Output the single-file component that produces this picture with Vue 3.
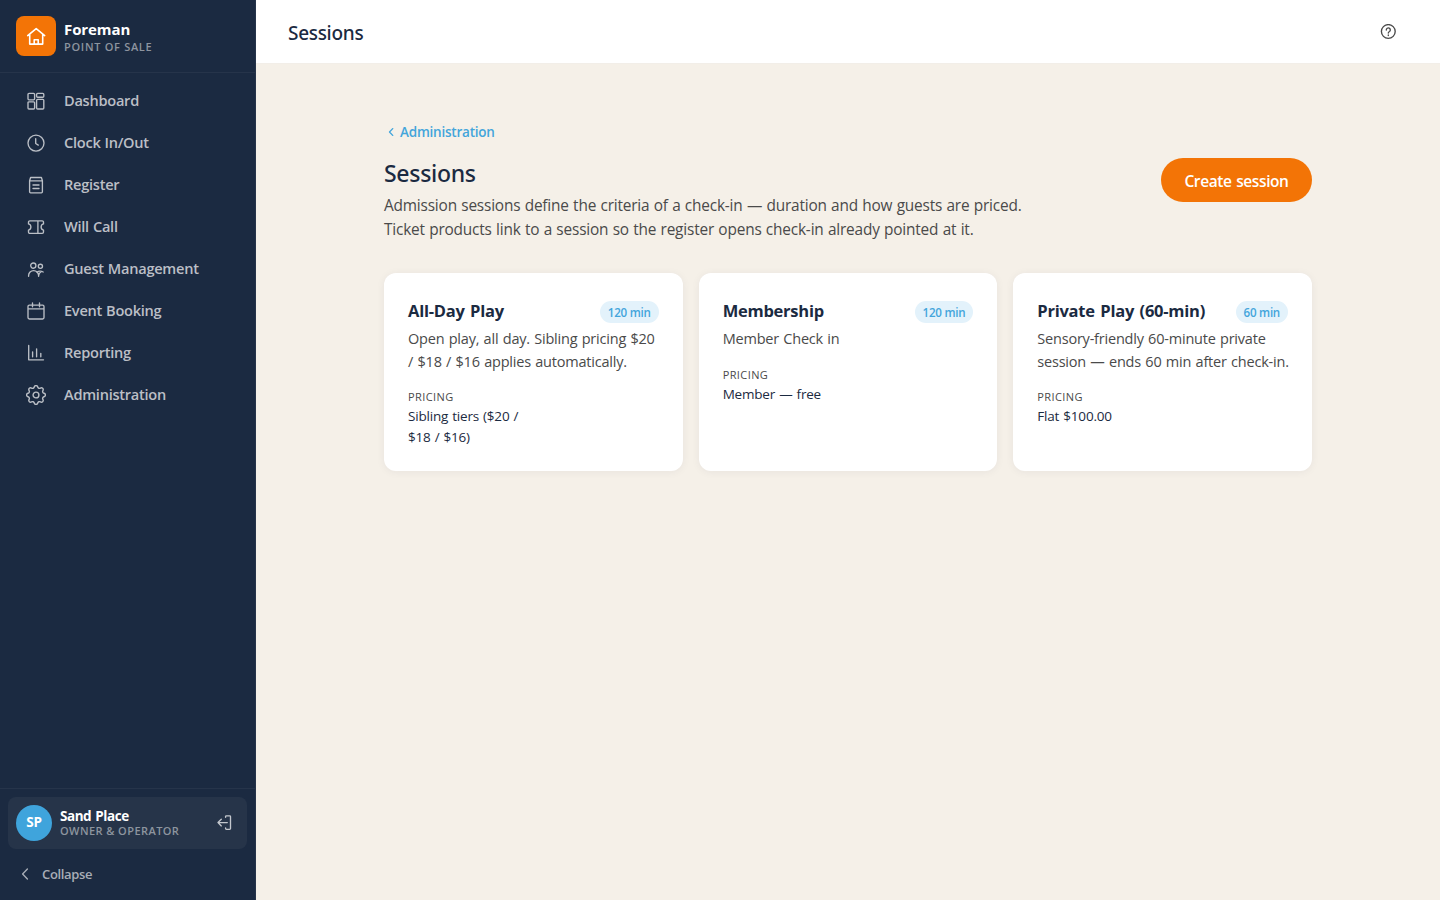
<script setup>
import { ref } from 'vue'

const navItems = [
  { id: 'dashboard', label: 'Dashboard' },
  { id: 'clock', label: 'Clock In/Out' },
  { id: 'register', label: 'Register' },
  { id: 'ticket', label: 'Will Call' },
  { id: 'guests', label: 'Guest Management' },
  { id: 'calendar', label: 'Event Booking' },
  { id: 'chart', label: 'Reporting' },
  { id: 'gear', label: 'Administration', viewBox: '2.4 2.4 19.2 19.2' }
]

const icons = {
  dashboard:
    'M3 2.4h4.6a1 1 0 0 1 1 1v4.4a1 1 0 0 1-1 1H3a1 1 0 0 1-1-1V3.4a1 1 0 0 1 1-1zM11.6 2.4h5.2a1 1 0 0 1 1 1v1.8a1 1 0 0 1-1 1h-5.2a1 1 0 0 1-1-1V3.4a1 1 0 0 1 1-1zM3 10.8h4.6a1 1 0 0 1 1 1v5.2a1 1 0 0 1-1 1H3a1 1 0 0 1-1-1v-5.2a1 1 0 0 1 1-1zM11.6 8.3h5.2a1 1 0 0 1 1 1V17a1 1 0 0 1-1 1h-5.2a1 1 0 0 1-1-1V9.3a1 1 0 0 1 1-1z',
  clock: 'M10 2.1a8 8 0 1 0 0 16 8 8 0 0 0 0-16zM9.7 5.6v4.9l2.6 1.6',
  register:
    'M3.6 5.8h12.8v11a1 1 0 0 1-1 1H4.6a1 1 0 0 1-1-1zM3.6 5.8l1-3.3h10.8l1 3.3M7 10h6M7 13.5h6',
  ticket:
    'M3.8 3.8h12.4a1.3 1.3 0 0 1 1.3 1.3v1.8a3.2 3.2 0 0 0 0 6.2v2a1.3 1.3 0 0 1-1.3 1.3H3.8a1.3 1.3 0 0 1-1.3-1.3v-2a3.2 3.2 0 0 0 0-6.2V5.1a1.3 1.3 0 0 1 1.3-1.3zM11.9 3.8v12.6',
  guests:
    'M7.3 4a2.6 2.6 0 1 0 0 5.2 2.6 2.6 0 0 0 0-5.2zM14.4 5.2a2.1 2.1 0 1 0 0 4.2 2.1 2.1 0 0 0 0-4.2zM2.6 17.2v-.6a5 5 0 0 1 10 0v.6M10.8 13.2c1.7-1.1 4.3-1.3 6.4-.2M12.7 16.5c0-1.6 1-2.9 2.3-3.8',
  calendar:
    'M3.4 4.1h13.2a1.4 1.4 0 0 1 1.4 1.4v11.1a1.4 1.4 0 0 1-1.4 1.4H3.4A1.4 1.4 0 0 1 2 16.6V5.5a1.4 1.4 0 0 1 1.4-1.4zM2 7.9h16M6.5 2v3.8M13.5 2v3.8',
  chart: 'M2.7 2.5v14.3h14.8M6.6 8.8v5M10.6 5.8v8M14.8 10.3v3.5',
  gear:
    'M10.325 4.317c.426-1.756 2.924-1.756 3.35 0a1.724 1.724 0 0 0 2.573 1.066c1.543-.94 3.31.826 2.37 2.37a1.724 1.724 0 0 0 1.065 2.572c1.756.426 1.756 2.924 0 3.35a1.724 1.724 0 0 0-1.066 2.573c.94 1.543-.826 3.31-2.37 2.37a1.724 1.724 0 0 0-2.572 1.065c-.426 1.756-2.924 1.756-3.35 0a1.724 1.724 0 0 0-2.573-1.066c-1.543.94-3.31-.826-2.37-2.37a1.724 1.724 0 0 0-1.065-2.572c-1.756-.426-1.756-2.924 0-3.35a1.724 1.724 0 0 0 1.066-2.573c-.94-1.543.826-3.31 2.37-2.37 1 .608 2.296.07 2.572-1.065zM12 9.2a2.8 2.8 0 1 0 0 5.6 2.8 2.8 0 0 0 0-5.6z'
}

const sessions = [
  {
    name: 'All-Day Play',
    duration: '120 min',
    description: 'Open play, all day. Sibling pricing $20 / $18 / $16 applies automatically.',
    pricing: 'Sibling tiers ($20 / $18 / $16)'
  },
  {
    name: 'Membership',
    duration: '120 min',
    description: 'Member Check in',
    pricing: 'Member — free'
  },
  {
    name: 'Private Play (60-min)',
    duration: '60 min',
    description: 'Sensory-friendly 60-minute private session — ends 60 min after check-in.',
    pricing: 'Flat $100.00'
  }
]

const activeNav = ref(null)
</script>

<template>
  <div class="app">
    <aside class="sidebar">
      <div class="brand">
        <div class="brand-logo">
          <svg width="20" height="20" viewBox="0 0 20 20">
            <path d="M1.7 9.6l8.5-6.9 8.5 6.9M3.7 8.2v9.9h13V8.2M8.2 18.1v-4.3h4v4.3" />
          </svg>
        </div>
        <div class="brand-text">
          <div class="brand-name">Foreman</div>
          <div class="brand-sub">POINT OF SALE</div>
        </div>
      </div>

      <nav class="nav">
        <a
          v-for="item in navItems"
          :key="item.id"
          :class="['nav-item', { active: item.id === activeNav }]"
          @click="activeNav = item.id"
        >
          <svg width="20" height="20" :viewBox="item.viewBox || '0 0 20 20'">
            <path :d="icons[item.id]" />
          </svg>
          <span>{{ item.label }}</span>
        </a>
      </nav>

      <div class="sidebar-footer">
        <div class="user-card">
          <div class="avatar">SP</div>
          <div class="user-info">
            <div class="user-name">Sand Place</div>
            <div class="user-role">OWNER &amp; OPERATOR</div>
          </div>
          <svg class="logout" width="16" height="16" viewBox="0 0 16 16">
            <path d="M9.6 2.2V1.6a.8.8 0 0 1 .8-.8h3.3a.8.8 0 0 1 .8.8v12a.8.8 0 0 1-.8.8h-3.3a.8.8 0 0 1-.8-.8V13M11.3 7.6H2M5.3 4.3L2 7.6l3.3 3.3" />
          </svg>
        </div>
        <button class="collapse">
          <svg width="18" height="18" viewBox="0 0 18 18">
            <path d="M11.4 4L6.6 9l4.8 5" />
          </svg>
          <span>Collapse</span>
        </button>
      </div>
    </aside>

    <div class="main">
      <header class="topbar">
        <h1>Sessions</h1>
        <button class="help" title="Help">
          <svg width="16" height="16" viewBox="0 0 16 16">
            <circle cx="8.3" cy="7.5" r="6.9" />
            <path d="M6.3 6a2 2 0 1 1 3.2 1.5c-.8.5-1.2.8-1.2 1.5" />
            <path d="M8.3 11v.5" />
          </svg>
        </button>
      </header>

      <main class="content">
        <a class="back">
          <svg width="12" height="12" viewBox="0 0 12 12">
            <path d="M7.7 2.6L4.5 6l3.2 3.4" />
          </svg>
          <span>Administration</span>
        </a>
        <div class="page-head">
          <div>
            <h2>Sessions</h2>
            <p class="lead">
              Admission sessions define the criteria of a check-in — duration and how guests are priced.<br />
              Ticket products link to a session so the register opens check-in already pointed at it.
            </p>
          </div>
          <button class="create-btn">Create session</button>
        </div>

        <div class="cards">
          <article v-for="session in sessions" :key="session.name" class="card">
            <div class="card-head">
              <h3>{{ session.name }}</h3>
              <span class="pill">{{ session.duration }}</span>
            </div>
            <p class="card-desc">{{ session.description }}</p>
            <dl class="card-pricing">
              <dt>PRICING</dt>
              <dd>{{ session.pricing }}</dd>
            </dl>
          </article>
        </div>
      </main>
    </div>
  </div>
</template>

<style>
body {
  margin: 0;
}
</style>

<style scoped>
.app {
  display: flex;
  height: 100vh;
  background-color: #f5f0e8;
  font-family: 'Segoe UI', 'Open Sans', 'Noto Sans', sans-serif;
  color: #1b2a41;
}

h1,
h2,
h3,
p,
dl,
dd {
  margin: 0;
}

button {
  font-family: inherit;
  border: none;
  background: none;
  padding: 0;
  cursor: pointer;
}

svg {
  flex-shrink: 0;
  fill: none;
  stroke: currentColor;
  stroke-width: 1.35;
  stroke-linecap: round;
  stroke-linejoin: round;
}

.sidebar {
  width: 256px;
  box-sizing: border-box;
  flex-shrink: 0;
  display: flex;
  flex-direction: column;
  background-color: #1b2a41;
  border-right: 1px solid #26344a;
}

.brand {
  height: 73px;
  box-sizing: border-box;
  display: flex;
  align-items: center;
  gap: 8px;
  padding: 0 16px;
  border-bottom: 1px solid #26344a;
}

.brand-logo {
  width: 40px;
  height: 40px;
  border-radius: 8px;
  background-color: #f37406;
  color: #ffffff;
  display: flex;
  align-items: center;
  justify-content: center;
}

.brand-logo svg {
  stroke-width: 1.6;
}

.brand-text {
  padding-top: 3px;
}

.brand-name {
  font-size: 15px;
  line-height: 18px;
  font-weight: 700;
  color: #ffffff;
  letter-spacing: -0.1px;
}

.brand-sub {
  font-size: 11px;
  line-height: 17px;
  font-weight: 600;
  letter-spacing: 0.7px;
  color: #8d949f;
}

.nav {
  flex: 1;
  display: flex;
  flex-direction: column;
  gap: 2px;
  padding: 7px 8px;
}

.nav-item {
  height: 40px;
  display: flex;
  align-items: center;
  gap: 18px;
  padding-left: 18px;
  font-size: 14.6px;
  font-weight: 600;
  letter-spacing: -0.27px;
  word-spacing: 0.5px;
  color: #bbbfc6;
  cursor: pointer;
}

.nav-item svg {
  margin-top: 1px;
}

.nav-item.active {
  color: #ffffff;
}

.sidebar-footer {
  border-top: 1px solid #26344a;
  padding: 8px;
  height: 112px;
  box-sizing: border-box;
}

.user-card {
  height: 52px;
  box-sizing: border-box;
  display: flex;
  align-items: center;
  gap: 8px;
  padding: 0 15px 0 8px;
  border-radius: 8px;
  background-color: #263449;
}

.avatar {
  width: 36px;
  height: 36px;
  box-sizing: border-box;
  padding-bottom: 2px;
  border-radius: 50%;
  background-color: #3fa4dc;
  color: #ffffff;
  font-size: 13.5px;
  font-weight: 700;
  letter-spacing: -0.2px;
  display: flex;
  align-items: center;
  justify-content: center;
}

.user-info {
  flex: 1;
}

.user-name {
  font-size: 13.5px;
  line-height: 16px;
  font-weight: 700;
  color: #ffffff;
  letter-spacing: -0.45px;
  word-spacing: 1px;
}

.user-role {
  font-size: 11px;
  line-height: 14px;
  font-weight: 600;
  letter-spacing: 0.43px;
  color: #8d949f;
}

.logout {
  color: #c3c7cd;
}

.collapse {
  display: flex;
  align-items: center;
  gap: 8px;
  height: 36px;
  margin-top: 7px;
  padding-left: 8px;
  font-size: 13px;
  font-weight: 600;
  letter-spacing: -0.35px;
  color: #a8adb6;
}

.main {
  flex: 1;
  min-width: 0;
}

.topbar {
  height: 64px;
  box-sizing: border-box;
  display: flex;
  align-items: center;
  justify-content: space-between;
  padding: 1px 44px 0 32px;
  background-color: #ffffff;
  border-bottom: 1px solid #f2eee8;
}

.topbar h1 {
  padding-top: 2px;
  font-family: 'Segoe UI', 'Noto Sans', sans-serif;
  font-size: 19px;
  line-height: 28px;
  font-weight: 500;
  letter-spacing: -0.3px;
}

.help {
  display: flex;
  color: #4a4a4a;
}

.content {
  width: 928px;
  margin: 0 auto;
  padding-top: 58px;
}

.back {
  display: flex;
  align-items: center;
  width: fit-content;
  height: 20px;
  gap: 3px;
  padding-left: 1px;
  font-size: 13.5px;
  font-weight: 600;
  letter-spacing: -0.22px;
  color: #43a5db;
}

.page-head {
  display: flex;
  justify-content: space-between;
  align-items: flex-start;
  height: 83px;
  padding-top: 16px;
}

.page-head h2 {
  font-family: 'Segoe UI', 'Noto Sans', sans-serif;
  font-size: 23px;
  line-height: 30px;
  font-weight: 500;
  letter-spacing: -0.3px;
}

.lead {
  margin-top: 6px;
  font-size: 15.4px;
  line-height: 24px;
  color: #4a4a4a;
  letter-spacing: -0.18px;
  word-spacing: 0.5px;
  white-space: nowrap;
}

.create-btn {
  width: 151px;
  height: 44px;
  padding-top: 2px;
  border-radius: 22px;
  background-color: #f37406;
  color: #ffffff;
  font-size: 15.5px;
  font-weight: 600;
  letter-spacing: -0.4px;
  word-spacing: 1px;
  white-space: nowrap;
}

.cards {
  display: grid;
  grid-template-columns: repeat(3, 1fr);
  gap: 16px;
  margin-top: 32px;
}

.card {
  height: 198px;
  box-sizing: border-box;
  padding: 24px 22px 24px 24px;
  border-radius: 12px;
  background-color: #ffffff;
  box-shadow: 0 1px 8px rgba(27, 42, 65, 0.06);
}

.card-head {
  display: flex;
  justify-content: space-between;
  align-items: flex-start;
  height: 31px;
  margin-right: 2px;
}

.card-head h3 {
  font-size: 16.5px;
  line-height: 27px;
  font-weight: 700;
  letter-spacing: -0.25px;
  word-spacing: 1.5px;
  white-space: nowrap;
}

.pill {
  height: 22px;
  margin-top: 4px;
  padding: 0 8px;
  border-radius: 11px;
  background-color: #e3f2fb;
  color: #43a5db;
  font-size: 11.6px;
  line-height: 23px;
  font-weight: 600;
  letter-spacing: -0.25px;
  white-space: nowrap;
}

.card-desc {
  font-size: 14.5px;
  line-height: 22.5px;
  color: #4a4a4a;
  letter-spacing: -0.21px;
  word-spacing: 0.8px;
}

.card-pricing {
  width: 121px;
  margin-top: 15px;
}

.card-pricing dt {
  padding-bottom: 1px;
  font-size: 11px;
  line-height: 17px;
  letter-spacing: 0.4px;
  color: #4a4a4a;
}

.card-pricing dd {
  font-size: 13.5px;
  line-height: 21px;
  letter-spacing: -0.2px;
  word-spacing: 0.8px;
}
</style>
